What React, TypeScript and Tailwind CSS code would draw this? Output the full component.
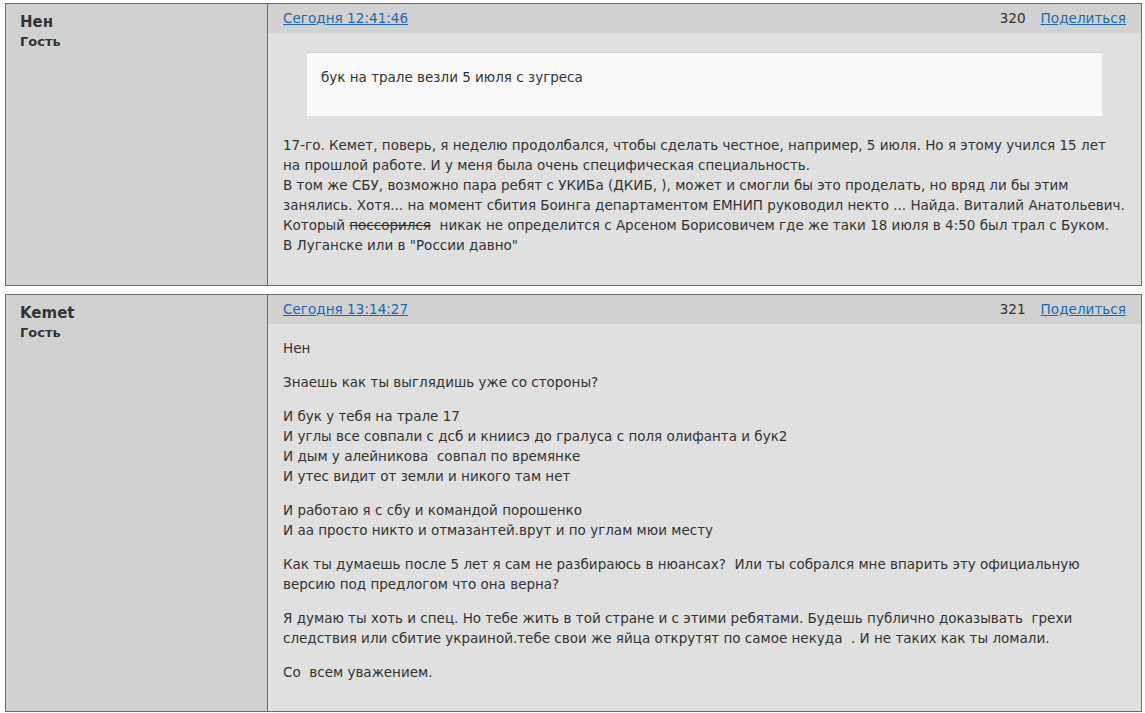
import React from "react";

const FONT = "font-['DejaVu_Sans','Verdana',sans-serif]";

type PostProps = {
  author: string;
  time: string;
  num: number;
  children: React.ReactNode;
};

function Post({ author, time, num, children }: PostProps) {
  return (
    <div className="flex border border-[#6b6b6b] bg-[#dfe0df]">
      <div className="w-[262px] shrink-0 bg-[#d1d1d1] border-r border-[#6b6b6b] px-[14px] pt-[8px]">
        <div className="text-[15px] font-bold leading-[20px] text-[#333]">{author}</div>
        <div className="text-[13px] font-bold leading-[20px] text-[#333]">Гость</div>
      </div>
      <div className="flex-1 min-w-0 flex flex-col">
        <div className="h-[29px] bg-[#d1d1d1] flex items-center justify-between px-[15px] text-[13.6px]">
          <a href="#" className="text-[#1a69b5] underline">{time}</a>
          <div className="flex items-center gap-[15px]">
            <span className="text-[#333]">{num}</span>
            <a href="#" className="text-[#1a69b5] underline">Поделиться</a>
          </div>
        </div>
        <div className="px-[15px] pb-[29px] text-[13.5px] leading-[20px] text-[#333]">{children}</div>
      </div>
    </div>
  );
}

export default function App() {
  return (
    <div className={`${FONT} bg-white min-h-[713px] pt-[3px] pl-[5px] pr-[3px] flex flex-col gap-[8px]`}>
      <Post author="Нен" time="Сегодня 12:41:46" num={320}>
        <div className="mx-[24px] mt-[19px] bg-[#f9f9f9] border-t border-[#cfcfcf] px-[14px] pt-[14px] pb-[29px]">
          бук на трале везли 5 июля с зугреса
        </div>
        <p className="mt-[19px] mb-[1px] whitespace-nowrap">
          17-го. Кемет, поверь, я неделю продолбался, чтобы сделать честное, например, 5 июля. Но я этому учился 15 лет
          <br />
          на прошлой работе. И у меня была очень специфическая специальность.
          <br />
          В том же СБУ, возможно пара ребят с УКИБа (ДКИБ, ), может и смогли бы это проделать, но вряд ли бы этим
          <br />
          занялись. Хотя... на момент сбития Боинга департаментом ЕМНИП руководил некто ... Найда. Виталий Анатольевич.
          <br />
          Который <s>поссорился</s>&nbsp; никак не определится с Арсеном Борисовичем где же таки 18 июля в 4:50 был трал с Буком.
          <br />
          В Луганске или в "России давно"
        </p>
      </Post>
      <Post author="Kemet" time="Сегодня 13:14:27" num={321}>
        <div className="pt-[14px] flex flex-col gap-[14px] whitespace-nowrap">
          <p>Нен</p>
          <p>Знаешь как ты выглядишь уже со стороны?</p>
          <p>
            И бук у тебя на трале 17
            <br />
            И углы все совпали с дсб и книисэ до гралуса с поля олифанта и бук2
            <br />
            И дым у алейникова&nbsp; совпал по времянке
            <br />
            И утес видит от земли и никого там нет
          </p>
          <p>
            И работаю я с сбу и командой порошенко
            <br />
            И аа просто никто и отмазантей.врут и по углам мюи месту
          </p>
          <p>
            Как ты думаешь после 5 лет я сам не разбираюсь в нюансах?&nbsp; Или ты собрался мне впарить эту официальную
            <br />
            версию под предлогом что она верна?
          </p>
          <p>
            Я думаю ты хоть и спец. Но тебе жить в той стране и с этими ребятами. Будешь публично доказывать&nbsp; грехи
            <br />
            следствия или сбитие украиной.тебе свои же яйца открутят по самое некуда&nbsp; . И не таких как ты ломали.
          </p>
          <p>Со&nbsp; всем уважением.</p>
        </div>
      </Post>
    </div>
  );
}
